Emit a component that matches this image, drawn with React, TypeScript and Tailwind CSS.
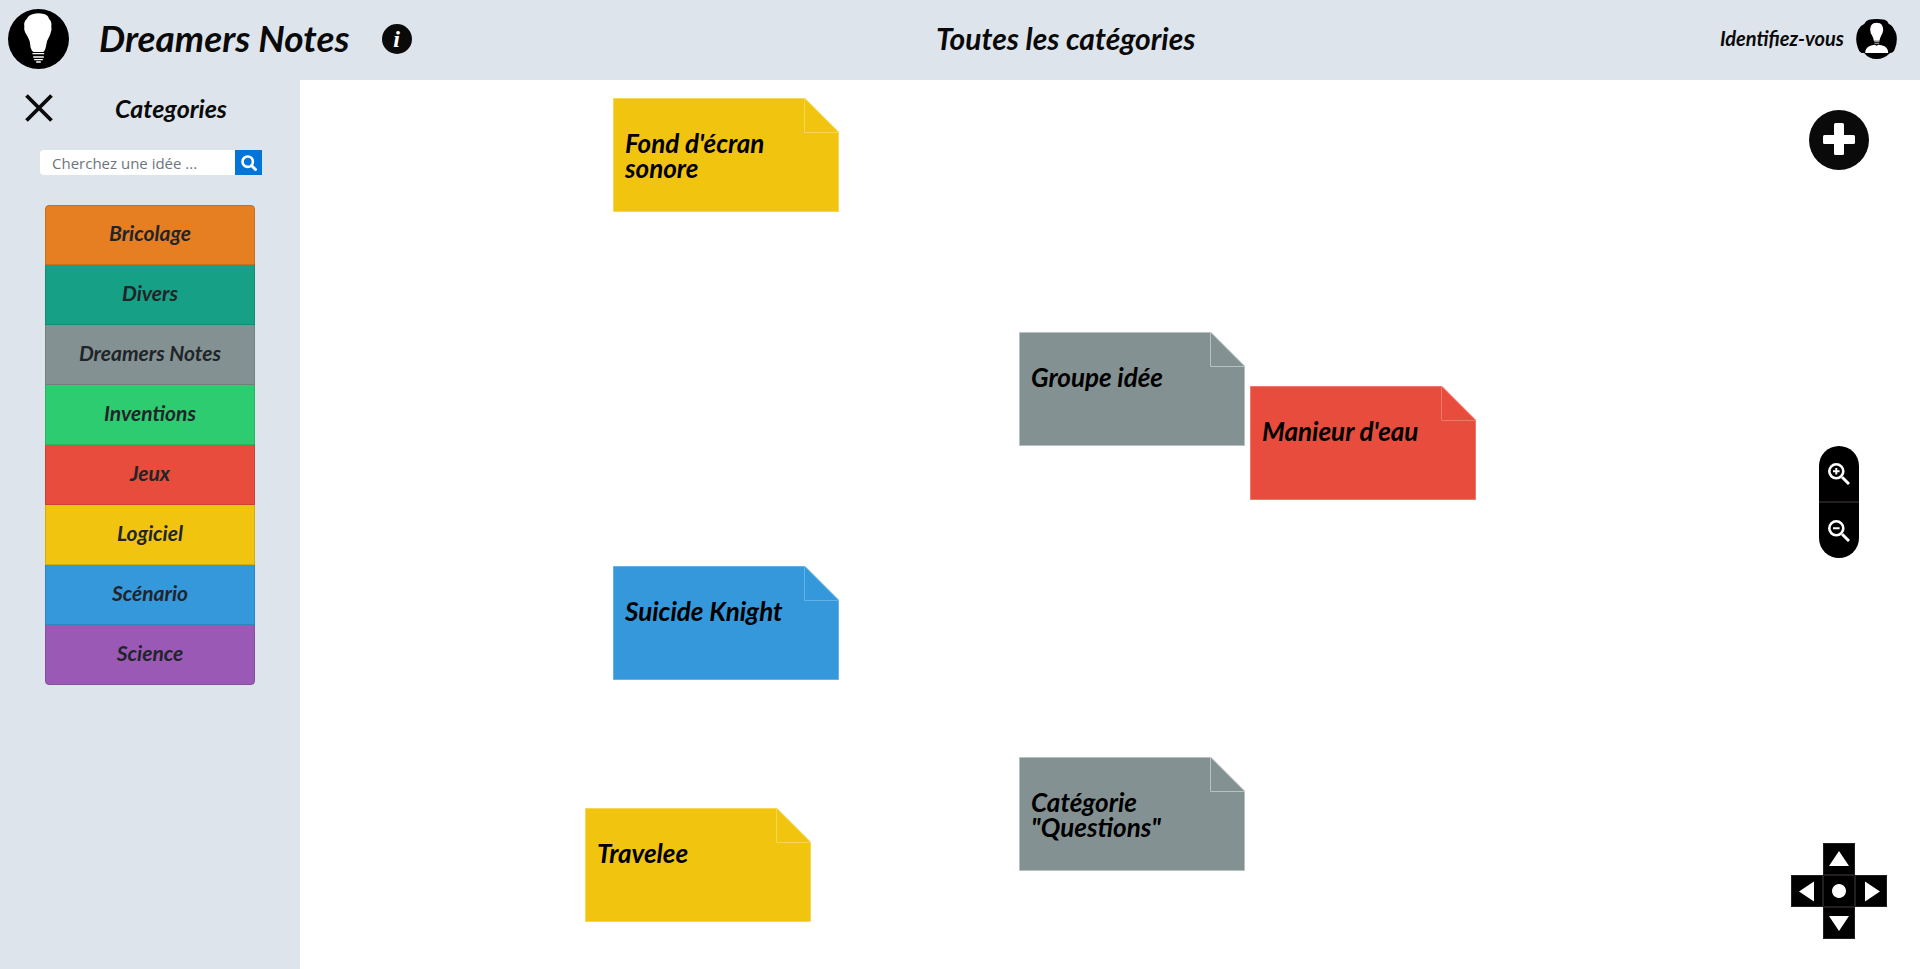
const script = "font-['Lato','Liberation_Sans',sans-serif] font-bold italic";

const categories = [
  { name: "Bricolage", tone: "bg-[#e67e22]" },
  { name: "Divers", tone: "bg-[#16a085]" },
  { name: "Dreamers Notes", tone: "bg-[#839192]" },
  { name: "Inventions", tone: "bg-[#2ecc71]" },
  { name: "Jeux", tone: "bg-[#e74c3c]" },
  { name: "Logiciel", tone: "bg-[#f1c40f]" },
  { name: "Scénario", tone: "bg-[#3498db]" },
  { name: "Science", tone: "bg-[#9b59b6]" },
];

const notes = [
  { title: "Fond d'écran sonore", place: "left-[313px] top-[18px]", fill: "#f1c40f", edge: "#f5d657" },
  { title: "Groupe idée", place: "left-[719px] top-[252px]", fill: "#839192", edge: "#b4c3c4" },
  { title: "Manieur d'eau", place: "left-[950px] top-[306px]", fill: "#e74c3c", edge: "#f0776a" },
  { title: "Suicide Knight", place: "left-[313px] top-[486px]", fill: "#3498db", edge: "#62b1e8" },
  { title: 'Catégorie "Questions"', place: "left-[719px] top-[677px]", fill: "#839192", edge: "#b4c3c4" },
  { title: "Travelee", place: "left-[285px] top-[728px]", fill: "#f1c40f", edge: "#f5d657" },
];

function Logo() {
  return (
    <svg viewBox="0 0 183 180" className="h-[60px] w-[61px]" aria-hidden="true">
      <ellipse cx="91.5" cy="90" rx="91.5" ry="90" fill="#000" />
      <path
        d="M76 15 Q91 11 107 15 Q119 17 123 29 Q132 37 130 51 Q133 64 126 78 Q121 88 117 97 L113 116 Q110 128 104 129 L77 129 Q71 127 68 116 L65 97 Q62 88 56 78 Q47 66 49 52 Q46 38 57 29 Q61 18 76 15Z"
        fill="#fff"
      />
      <path d="M75 134H107M77 144H106M80 152H103M86 159H97" stroke="#fff" strokeWidth="4" strokeLinecap="round" />
    </svg>
  );
}

function Avatar() {
  return (
    <svg viewBox="0 0 122 120" className="h-10 w-[41px]" aria-hidden="true">
      <path
        d="M38 2 Q61 -2 86 2 Q94 5 98 15 Q108 18 114 32 Q122 42 122 60 Q122 76 116 90 Q112 102 102 102 Q84 120 61 120 Q38 120 24 102 L16 102 Q8 98 5 86 Q0 74 0 60 Q0 44 6 32 Q13 19 24 15 Q29 5 38 2Z"
        fill="#000"
      />
      <path d="M52 13 Q61 10 71 13 Q81 18 81 33 Q80 43 75 50 Q71 57 70 65 L53 65 Q52 57 48 50 Q42 42 42 32 Q43 17 52 13Z" fill="#fff" />
      <path d="M54 68H70M55 73H69" stroke="#fff" strokeWidth="2" />
      <path d="M27 102 Q27 88 39 82 Q48 77 56 77 L61 80 L67 77 Q76 77 85 82 Q96 88 96 102Z" fill="#fff" />
    </svg>
  );
}

function Magnifier({ sign }: { sign: string }) {
  return (
    <svg viewBox="0 0 22 22" className="h-[22px] w-[22px]" fill="none" stroke="#fff" aria-hidden="true">
      <circle cx="8.3" cy="8.3" r="7" strokeWidth="2.6" />
      <path d="M14.2 14.2 L21 21" strokeWidth="3" />
      <path d={sign} strokeWidth="2" />
    </svg>
  );
}

function PadKey({ label, shape, place }: { label: string; shape: string; place: string }) {
  return (
    <button aria-label={label} className={`h-8 w-8 border border-[#231f20] bg-black ${place}`}>
      <svg viewBox="0 0 30 30" className="h-full w-full" fill="#fff" aria-hidden="true">
        <path d={shape} />
      </svg>
    </button>
  );
}

export default function App() {
  return (
    <div className="flex min-h-screen flex-col bg-white text-[#0a0a0a]">
      <header className={`flex h-20 items-center justify-between bg-[#dde4eb] pb-0.5 pl-2 pr-[23px] ${script}`}>
        <div className="flex items-center">
          <Logo />
          <h1 className="ml-[30px] pb-0.5 text-[37px] leading-10">Dreamers Notes</h1>
          <button
            aria-label="Informations"
            className="ml-8 h-[30px] w-[30px] rounded-full bg-[#0a0a0a] font-['Liberation_Serif',serif] text-[24px] leading-[28px] text-white"
          >
            i
          </button>
        </div>
        <h2 className="pb-0.5 text-[30px] leading-10">Toutes les catégories</h2>
        <a href="#connexion" className="flex items-center gap-3 text-[20px]">
          <span className="pb-0.5">Identifiez-vous</span>
          <Avatar />
        </a>
      </header>

      <div className="flex flex-1">
        <aside className="w-[300px] shrink-0 bg-[#dde4eb]">
          <div className="flex h-14 items-center pl-[25px]">
            <button aria-label="Fermer" className="h-7 w-7">
              <svg viewBox="0 0 28 28" className="h-7 w-7" stroke="#0a0a0a" strokeWidth="3.8" aria-hidden="true">
                <path d="M1.500 1.500L26.500 26.500M26.500 1.500L1.500 26.500" />
              </svg>
            </button>
            <h2 className={`ml-[62px] text-[25px] leading-8 ${script}`}>Categories</h2>
          </div>
          <form className="ml-10 mt-[14px] flex h-[25px] w-[222px]">
            <input
              type="text"
              aria-label="Cherchez une idée"
              placeholder="Cherchez une idée ..."
              className="min-w-0 flex-1 rounded-l bg-white px-3 font-['Open_Sans','Noto_Sans',sans-serif] text-[15px] leading-6 outline-none placeholder:text-[#6c757d]"
            />
            <button type="button" aria-label="Rechercher" className="flex w-[27px] items-center justify-center bg-[#0275d8]">
              <svg viewBox="0 0 16 16" className="h-4 w-4" fill="none" stroke="#fff" aria-hidden="true">
                <circle cx="6.7" cy="6.7" r="5.2" strokeWidth="2.6" />
                <path d="M10.5 10.5L14.5 14.5" strokeWidth="3" strokeLinecap="round" />
              </svg>
            </button>
          </form>
          <ul className={`mx-[45px] mt-[30px] overflow-hidden rounded text-[21px] text-[#212529] ${script}`}>
            {categories.map((c) => (
              <li key={c.name} className="group">
                <button
                  className={`h-[60px] w-full border-x border-b border-black/[.125] pb-1 group-first:rounded-t group-first:border-t group-last:rounded-b ${c.tone}`}
                >
                  {c.name}
                </button>
              </li>
            ))}
          </ul>
        </aside>

        <main className="relative flex flex-1 justify-end overflow-hidden">
          {notes.map((n) => (
            <article key={n.title} className={`absolute h-[114px] w-[226px] pl-3 pr-10 pt-[33px] ${n.place}`}>
              <svg viewBox="0 0 226 114" className="absolute inset-0 h-full w-full" stroke={n.edge} aria-hidden="true">
                <path d="M.5 .5H192L225.500 34V113.500H.5Z" fill={n.fill} />
                <path d="M191.500 .5V34.500H225.500" fill="none" />
              </svg>
              <h3 className={`relative text-[26px] leading-[25px] text-black ${script}`}>{n.title}</h3>
            </article>
          ))}

          <div className="mr-[33px] flex flex-col items-center pb-[30px] pt-[30px]">
            <button aria-label="Ajouter" className="h-[60px] w-[60px] rounded-full bg-[#0a0a0a]">
              <svg viewBox="0 0 60 60" fill="#fff" aria-hidden="true">
                <rect x="25" y="13" width="10" height="32" rx="1.5" />
                <rect x="14" y="25" width="32" height="9" rx="1.5" />
              </svg>
            </button>
            <div className="mt-[276px] flex h-28 w-10 flex-col overflow-hidden rounded-full bg-black">
              <button aria-label="Zoom avant" className="flex flex-1 items-center justify-center border-b-2 border-[#231f20]">
                <Magnifier sign="M5 8.3H11.6M8.3 5V11.6" />
              </button>
              <button aria-label="Zoom arrière" className="flex flex-1 items-center justify-center">
                <Magnifier sign="M5 8.3H11.6" />
              </button>
            </div>
            <div className="mt-auto grid grid-cols-3">
              <PadKey label="Haut" place="col-start-2" shape="M15 7L25 22H5Z" />
              <PadKey label="Gauche" place="col-start-1 row-start-2" shape="M7 15.500L22 5.500V25.500Z" />
              <PadKey label="Centrer" place="col-start-2 row-start-2" shape="M15 8a7 7 0 1 0 .01 0Z" />
              <PadKey label="Droite" place="col-start-3 row-start-2" shape="M24 15.500L9 5.500V25.500Z" />
              <PadKey label="Bas" place="col-start-2 row-start-3" shape="M5 8H25L15 23Z" />
            </div>
          </div>
        </main>
      </div>
    </div>
  );
}
